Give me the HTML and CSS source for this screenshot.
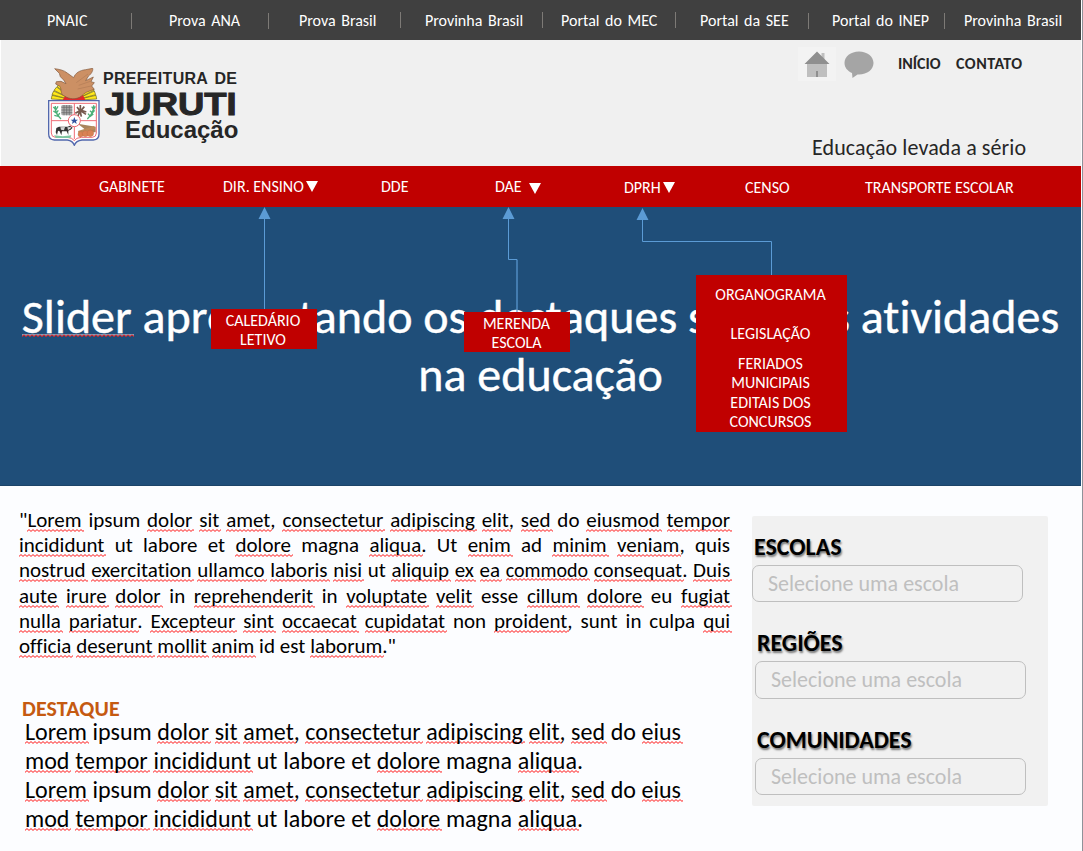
FILE: index.html
```html
<!DOCTYPE html>
<html lang="pt-BR">
<head>
<meta charset="utf-8">
<title>Prefeitura de Juruti - Educação</title>
<link rel="stylesheet" href="styles.css">
</head>
<body>
<div class="page">
  <nav class="topbar">
    <a>PNAIC</a><i></i><a>Prova ANA</a><i></i><a>Prova Brasil</a><i class="up"></i><a>Provinha Brasil</a><i class="up"></i><a>Portal do MEC</a><i class="up"></i><a>Portal da SEE</a><i></i><a>Portal do INEP</a><i></i><a>Provinha Brasil</a>
  </nav>

  <header class="header">
    <div class="brand">
      <svg class="crest" viewBox="24 25 156 234" width="52" height="78">
        <g fill="#ffe81a" stroke="#6b6410" stroke-width="2">
          <path d="M102 122 34 118 36 107Z"/><path d="M102 122 36 105 41 94Z"/><path d="M102 122 42 92 50 82Z"/><path d="M102 122 51 80 60 72Z"/>
          <path d="M102 122 170 118 168 107Z"/><path d="M102 122 167 105 163 94Z"/><path d="M102 122 162 92 154 82Z"/>
        </g>
        <path d="M68 121 77 107H129L136 121Z" fill="#e3262b"/>
        <path d="M44 27C57 29 72 31 83 41L101 54C106 40 119 32 137 30L158 26C160 34 153 43 145 50L137 63 160 52 153 66 163 69 155 79 163 89C145 95 132 99 124 110 108 121 87 118 75 110 59 105 66 91 60 80L47 73 49 66 63 65 78 72 71 61 61 51 58 41Z" fill="#cc9064" stroke="#81563a" stroke-width="2"/>
        <path d="M109 69 144 43M116 77 151 65M113 88 153 79" stroke="#a97450" stroke-width="1.500" fill="none"/>
        <path d="M26 123H177V223Q177 240 160 241H126Q108 243 103 257 98 243 82 241H43Q26 240 26 223Z" fill="#fff" stroke="#5268ad" stroke-width="4"/>
        <path d="M34 131H169V220Q169 232 157 233H124Q108 234 103 243 97 234 82 233H46Q34 232 34 220Z" fill="none" stroke="#ef6b75" stroke-width="3"/>
        <path d="M103 131V238M34 183H169" stroke="#ef6b75" stroke-width="3"/>
        <g stroke="#4caf78" stroke-width="4" fill="none">
          <path d="M46 139Q43 160 63 178M40 142 48 150 54 140M40 154 49 160 55 152M43 167 54 170 59 160"/>
          <path d="M161 137Q162 160 142 178M155 141 161 149 166 140M150 153 157 160 164 152M144 162 151 170 160 163"/>
        </g>
        <rect x="64" y="136" width="33" height="31" rx="4" fill="#aaa"/>
        <path d="M64 143H97M64 151H97M64 159H97M72 136V167M80 136V167M88 136V167" stroke="#666" stroke-width="2"/>
        <path d="M121 136V157M111 142 121 155 133 141M106 161 120 153 114 169M120 153 124 171M121 153 138 164M121 151 139 157" stroke="#76594e" stroke-width="5" fill="none"/>
        <path d="M42 227Q69 232 94 227L91 235H48Z" fill="#80c6a2"/>
        <path d="M49 205 57 201H83L90 198 98 204 92 210 85 213 85 226 80 215 66 215 64 227 59 215 54 213 51 226 47 218Z" fill="#333"/>
        <path d="M61 203 75 202 72 212 63 210ZM82 203 94 202 91 207 84 211Z" fill="#d6d6d6"/>
        <path d="M113 192 167 201V218H146Z" fill="#a9855d"/>
        <path d="M114 214 162 199 166 208 116 222Z" fill="#bd8b5b"/>
        <g fill="#d98254" stroke="#b5653d" stroke-width="1"><circle cx="122" cy="224" r="8"/><circle cx="136" cy="222" r="9"/><circle cx="151" cy="221" r="10"/></g>
        <circle cx="103" cy="183" r="18" fill="#fff" stroke="#ec6470" stroke-width="3"/>
        <path d="M103 172 106 180 114 180 108 185 110 193 103 188 96 193 98 185 92 180 100 180Z" fill="#31509f"/>
      </svg>
      <div class="wordmark">
        <span class="w1">PREFEITURA DE</span>
        <span class="w2">JURUTI</span>
        <span class="w3">Educação</span>
      </div>
    </div>
    <div class="side">
      <div class="quick">
        <svg width="38" height="34" viewBox="0 0 38 34"><path fill="#f3f3f3" d="M0 0h38v34H0z"/><path fill="#bfbfbf" d="M23.500 6h3v8h-3zM9 16h20v14H9z"/><path fill="#8f8f8f" d="M19 4.500 31.500 17h-25zM18 24h2v6h-2z"/></svg>
        <svg class="talk" width="30" height="27" viewBox="0 0 30 27"><path fill="#a5a5a5" d="M15 .5C23.300 .5 29.500 5.600 29.500 12S23.300 23.500 15 23.500L13.500 23.400 8.500 27 8 22C3.400 20 .5 16.400 .5 12 .5 5.600 6.700 .5 15 .5Z"/></svg>
        <a class="home">INÍCIO</a><a class="contact">CONTATO</a>
      </div>
      <p class="slogan">Educação levada a sério</p>
    </div>
  </header>

  <nav class="menu">
    <a>GABINETE</a>
    <a>DIR. ENSINO<svg width="12" height="11"><path d="M0 0h12L6 11z"/></svg></a>
    <a>DDE</a>
    <a class="gap">DAE<svg width="12" height="11"><path d="M0 0h12L6 11z"/></svg></a>
    <a class="low">DPRH<svg width="12" height="11"><path d="M0 0h12L6 11z"/></svg></a>
    <a class="low">CENSO</a>
    <a class="low">TRANSPORTE ESCOLAR</a>
  </nav>

  <section class="hero">
    <h1><u class="big">Slider</u> apresentando os destaques sobre as atividades<br>na educação</h1>
    <svg class="arrows" width="1081" height="279" viewBox="0 0 1081 279">
      <g fill="none" stroke="#5b9bd5">
        <path d="M264.500 10V103"/>
        <path d="M508.500 10V52.500H517"/><path d="M517 52.500V106" stroke-width="2" opacity=".6"/>
        <path d="M642.500 10V34.500H771.500V70"/>
      </g>
      <path fill="#5b9bd5" d="M264.500 0l6 12h-12zM508.500 0l6 12h-12zM642.500 1l6 12h-12z"/>
    </svg>
    <div class="drop d1">CALEDÁRIO<br>LETIVO</div>
    <div class="drop d2">MERENDA<br>ESCOLA</div>
    <div class="drop d3"><span>ORGANOGRAMA</span><span>LEGISLAÇÃO</span><span>FERIADOS<br>MUNICIPAIS</span><span>EDITAIS DOS<br>CONCURSOS</span></div>
  </section>

  <main class="content">
    <div class="text">
      <div class="intro">
        <p>"<u>Lorem</u> ipsum <u>dolor</u> <u>sit</u> <u>amet</u>, <u>consectetur</u> <u>adipiscing</u> <u>elit</u>, <u>sed</u> do <u>eiusmod</u> <u>tempor</u></p>
        <p><u>incididunt</u> ut labore et <u>dolore</u> magna <u>aliqua</u>. Ut <u>enim</u> ad <u>minim</u> <u>veniam</u>, quis</p>
        <p><u>nostrud</u> <u>exercitation</u> <u>ullamco</u> <u>laboris</u> <u>nisi</u> ut <u>aliquip</u> <u>ex</u> <u>ea</u> <u class="small">commodo</u> <u>consequat</u>. <u>Duis</u></p>
        <p><u>aute</u> <u>irure</u> <u>dolor</u> in <u>reprehenderit</u> in <u>voluptate</u> <u>velit</u> esse <u>cillum</u> <u>dolore</u> eu <u>fugiat</u></p>
        <p><u>nulla</u> <u>pariatur</u>. <u>Excepteur</u> <u>sint</u> <u>occaecat</u> <u>cupidatat</u> non <u>proident</u>, sunt in culpa <u>qui</u></p>
        <p class="last"><u>officia</u> <u>deserunt</u> <u>mollit</u> <u>anim</u> id est <u>laborum</u>."</p>
      </div>
      <h2>DESTAQUE</h2>
      <div class="feature">
        <p><u>Lorem</u> ipsum <u>dolor</u> <u>sit</u> <u>amet</u>, <u>consectetur</u> <u>adipiscing</u> <u>elit</u>, <u>sed</u> do <u>eius</u></p>
        <p class="short"><u>mod</u> <u>tempor</u> <u>incididunt</u> ut labore et <u>dolore</u> magna <u>aliqua</u>.</p>
        <p><u>Lorem</u> ipsum <u>dolor</u> <u>sit</u> <u>amet</u>, <u>consectetur</u> <u>adipiscing</u> <u>elit</u>, <u>sed</u> do <u>eius</u></p>
        <p class="short"><u>mod</u> <u>tempor</u> <u>incididunt</u> ut labore et <u>dolore</u> magna <u>aliqua</u>.</p>
      </div>
    </div>
    <aside class="filters">
      <div class="group first"><h3>ESCOLAS</h3><div class="field">Selecione uma escola</div></div>
      <div class="group second"><h3>REGIÕES</h3><div class="field">Selecione uma escola</div></div>
      <div class="group"><h3>COMUNIDADES</h3><div class="field">Selecione uma escola</div></div>
    </aside>
  </main>
</div>
</body>
</html>
```

FILE: styles.css
```css
* { box-sizing: border-box; }
body { margin: 0; background: #fcfdff; font-family: Carlito, Calibri, Lato, sans-serif; font-size: 16px; font-variant-ligatures: none; color: #000; overflow: hidden; }
p, h1, h2, h3 { margin: 0; font-weight: normal; }
.page { width: 1083px; height: 851px; border-right: 1px solid #8f9299; padding-right: 1px; }

u {
  text-decoration: none;
  padding-right: 2px;
  margin-right: -2px;
  background: url("data:image/svg+xml,%3Csvg xmlns='http://www.w3.org/2000/svg' width='4' height='3'%3E%3Cpath d='M-2 .6 0 2.400 2 .6 4 2.400 6 .6' fill='none' stroke='%23ff1a1a' stroke-width='1'/%3E%3C/svg%3E") repeat-x left bottom;
}

.topbar {
  height: 40px; padding-left: 47px; background: #404040; color: #fff;
  display: grid; align-items: center; white-space: nowrap; word-spacing: 2px;
  grid-template-columns: 84px 38px 99px 31px 101px 25px 117px 19px 114px 25px 108px 24px 112px 20px 1fr;
}
.topbar i { width: 1px; height: 16px; margin-top: 2px; background: #7d7a76; }
.topbar i.up { margin-top: 0; }

.header { height: 126px; background: #f0f0f0; border-left: 1px solid #fff; display: flex; justify-content: space-between; }
.brand { display: flex; padding: 28px 0 0 47px; }
.wordmark { display: flex; flex-direction: column; width: 140px; padding: 1px 0 0 3px; font-family: "Liberation Sans", Arial, sans-serif; font-weight: bold; color: #262626; white-space: nowrap; }
.w1 { font-size: 16px; line-height: 20px; letter-spacing: .3px; word-spacing: 2px; }
.w2 { font-size: 32px; line-height: 30px; width: 116px; margin-left: 2px; transform: scaleX(1.14); transform-origin: left; -webkit-text-stroke: 1px #262626; }
.w3 { font-size: 24px; line-height: 24px; margin: -1px 0 0 22px; }
.side { width: 283px; display: flex; flex-direction: column; color: #262626; }
.quick { display: flex; height: 48px; padding-top: 7px; font-weight: bold; line-height: 34px; }
.talk { margin: 4px 0 0 8px; }
.home { margin-left: 24px; width: 58px; }
.contact { letter-spacing: .5px; }
.slogan { margin: 46px 0 0 14px; font-size: 22px; line-height: 28px; letter-spacing: .1px; white-space: nowrap; }

.menu {
  height: 41px; padding-left: 99px; background: #c00000; color: #fff; display: grid; align-items: center; white-space: nowrap;
  grid-template-columns: 124px 158px 114px 129px 121px 120px 1fr;
}
.menu a { display: flex; align-items: center; gap: 2px; }
.menu .gap { gap: 7px; }
.menu .gap svg { margin-top: 3px; }
.menu .low { padding-top: 2px; }
.menu svg { fill: #fff; }

.hero { position: relative; height: 279px; background: #1f4e79; padding-top: 81px; border-bottom: 1px solid #1c4468; }
.hero h1 { font-size: 48px; line-height: 58px; text-align: center; color: #fff; white-space: nowrap; -webkit-text-stroke: .4px #fff; }
.hero .big {
  background-image: url("data:image/svg+xml,%3Csvg xmlns='http://www.w3.org/2000/svg' width='4' height='3'%3E%3Cpath d='M-2 -.4 0 1.400 2 -.4 4 1.400 6 -.4' fill='none' stroke='%23d5dce6' stroke-width='1'/%3E%3Cpath d='M-2 .8 0 2.600 2 .8 4 2.600 6 .8' fill='none' stroke='%23ff1a1a' stroke-width='1'/%3E%3C/svg%3E");
  background-position: left bottom 9px;
}
.arrows { position: absolute; left: 0; top: 0; }
.drop { position: absolute; background: #c00000; color: #fff; text-align: center; line-height: 19px; }
.d1 { left: 211px; top: 102px; width: 106px; height: 40px; padding: 2px 2px 0 0; }
.d2 { left: 464px; top: 105px; width: 106px; height: 40px; padding: 2px 1px 0 0; }
.d3 { left: 696px; top: 68px; width: 151px; height: 157px; display: flex; flex-direction: column; padding: 10px 2px 0 0; }
.d3 span:nth-child(2) { margin-top: 20px; }
.d3 span:nth-child(3) { margin-top: 11px; }
.d3 span:nth-child(4) { margin-top: 1px; }

.content { display: flex; padding-top: 21px; }
.text { width: 752px; padding: 1px 0 0 19px; }
.intro { width: 711px; font-size: 21px; line-height: 25.2px; }
.intro p { text-align: justify; text-align-last: justify; white-space: nowrap; width: 711px; }
.intro .last { width: 377px; }
.intro .small { font-size: 20px; }
.intro u { background-position: left bottom 1px; }
.text h2 { margin: 42px 0 0 3px; font-size: 22px; line-height: 16px; font-weight: bold; letter-spacing: .1px; color: #c55a11; }
.feature { padding-left: 6px; font-size: 24px; line-height: 29px; }
.feature p { width: 656px; text-align-last: justify; white-space: nowrap; }
.feature .short { width: 558px; }
.feature u { background-position: left bottom 2px; }

.filters { width: 296px; height: 290px; margin-top: 9px; padding-top: 15px; background: #f1f1f1; border-radius: 2px; }
.group { width: 271px; height: 97px; margin-left: 3px; }
.group.first { margin-left: 0; height: 96px; }
.group.first .field, .group:last-child .field { height: 37px; line-height: 35px; }
.group h3 { padding-left: 2px; font-size: 24px; line-height: 31px; height: 34px; font-weight: bold; text-shadow: 1px 2px 2px rgba(0,0,0,.5); }
.field { height: 38px; border: 1px solid #bfbfbf; border-radius: 7px; padding-left: 15px; font-size: 22px; line-height: 36px; color: #bfbfbf; white-space: nowrap; }
```
